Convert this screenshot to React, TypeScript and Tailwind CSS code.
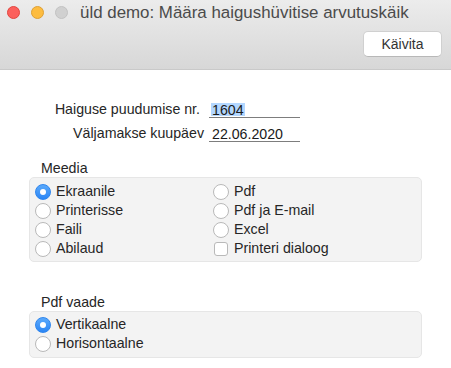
import React from 'react';

const font = { fontFamily: '"Liberation Sans", Arial, sans-serif' };

function Radio({ checked = false }: { checked?: boolean }) {
  if (checked) {
    return (
      <span className="flex h-[16px] w-[16px] shrink-0 items-center justify-center rounded-full bg-gradient-to-b from-[#5aa9fb] to-[#2b86f5] border border-[#2f86ee]">
        <span className="h-[6px] w-[6px] rounded-full bg-white" />
      </span>
    );
  }
  return <span className="h-[16px] w-[16px] shrink-0 rounded-full bg-white border border-[#b9b9b9]" />;
}

function Check() {
  return <span className="ml-[1px] mr-[1px] h-[14px] w-[14px] shrink-0 rounded-[3px] bg-white border border-[#b9b9b9]" />;
}

function Option({ label, checked, box }: { label: string; checked?: boolean; box?: boolean }) {
  return (
    <div className="flex h-[19px] items-center gap-[5px]">
      {box ? <Check /> : <Radio checked={checked} />}
      <span className="text-[14.2px] text-[#262626]">{label}</span>
    </div>
  );
}

export default function App() {
  return (
    <div style={font} className="w-[451px] h-[368px] bg-white overflow-hidden">
      {/* akna päis + tööriistariba */}
      <div className="h-[70px] border-b border-[#c9c9c9] bg-gradient-to-b from-[#ececec] to-[#d7d7d7]">
        <div className="flex h-[25px] items-center">
          <span className="ml-[7px] h-[13px] w-[13px] rounded-full bg-[#fc605c] border border-[#e2463f]" />
          <span className="ml-[11px] h-[13px] w-[13px] rounded-full bg-[#fdbc40] border border-[#dea034]" />
          <span className="ml-[11px] h-[13px] w-[13px] rounded-full bg-[#d0d0d0] border border-[#c2c2c2]" />
          <span className="ml-[12px] text-[16.9px] text-[#4b4b4b] whitespace-nowrap">üld demo: Määra haigushüvitise arvutuskäik</span>
        </div>
        <div className="flex justify-end pr-[9px] pt-[6px]">
          <button className="h-[26px] w-[79px] rounded-[5px] bg-white border border-[#d0d0d0] border-b-[#b8b8b8] text-[14px] text-[#333]">
            Käivita
          </button>
        </div>
      </div>

      {/* väljad */}
      <div className="mt-[24px] text-[14.2px]">
        <div className="flex h-[24px] items-end">
          <span className="w-[205px] pr-[5px] pb-[1px] text-right leading-[16px] text-[#262626]">Haiguse puudumise nr.</span>
          <div className="ml-[4px] h-[24px] w-[91px] border-b border-[#7d7d7d] flex items-end pb-[1px]">
            <span className="ml-[2px] px-[1px] h-[13px] bg-[#b3d7ff] text-[#1a1a1a] leading-[14px]">1604</span>
          </div>
        </div>
        <div className="flex h-[24px] items-end">
          <span className="w-[205px] pr-[1px] pb-[1px] text-right leading-[16px] text-[#262626]">Väljamakse kuupäev</span>
          <div className="ml-[4px] h-[24px] w-[91px] border-b border-[#7d7d7d] flex items-end pb-[1px]">
            <span className="ml-[3px] h-[13px] text-[#1a1a1a] leading-[14px]">22.06.2020</span>
          </div>
        </div>
      </div>

      {/* Meedia */}
      <div className="mt-[18px] ml-[41px] h-[17px] text-[14.2px] leading-[17px] text-[#262626]">Meedia</div>
      <div className="ml-[29px] w-[393px] rounded-[5px] border border-[#e6e6e6] bg-[#f3f3f3] pl-[5px] pt-[4px] pb-[3px] grid grid-cols-[178px_1fr]">
        <div>
          <Option label="Ekraanile" checked />
          <Option label="Printerisse" />
          <Option label="Faili" />
          <Option label="Abilaud" />
        </div>
        <div>
          <Option label="Pdf" />
          <Option label="Pdf ja E-mail" />
          <Option label="Excel" />
          <Option label="Printeri dialoog" box />
        </div>
      </div>

      {/* Pdf vaade */}
      <div className="mt-[32px] ml-[41px] h-[17px] text-[14.2px] leading-[17px] text-[#262626]">Pdf vaade</div>
      <div className="ml-[29px] w-[393px] rounded-[5px] border border-[#e6e6e6] bg-[#f3f3f3] pl-[5px] pt-[3px] pb-[4px]">
        <Option label="Vertikaalne" checked />
        <Option label="Horisontaalne" />
      </div>
    </div>
  );
}
